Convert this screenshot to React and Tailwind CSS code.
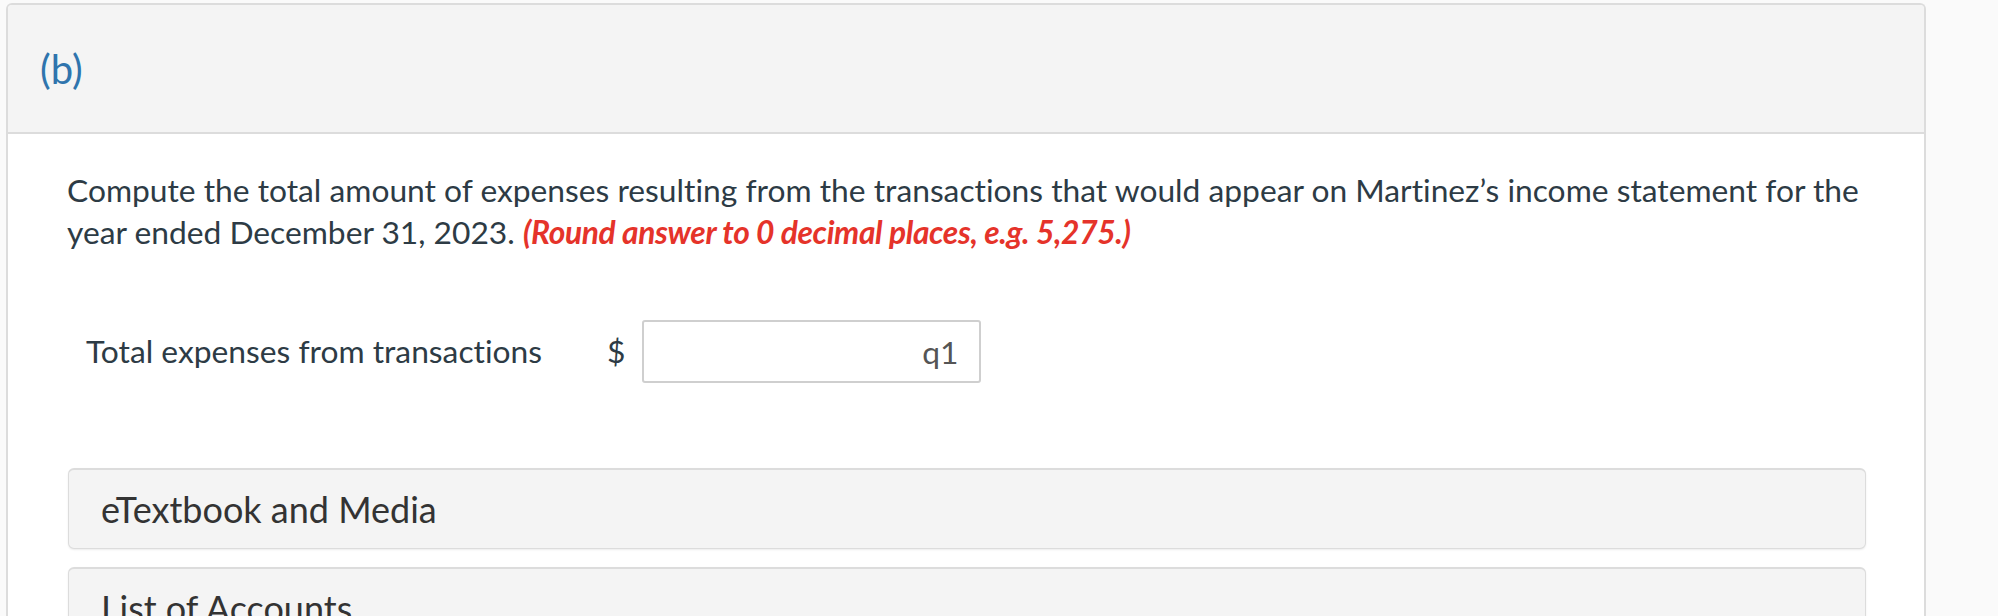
const Accordion = ({ title }) => {
  return (
    <div className="h-[81px] flex items-center px-[32px] bg-[#f4f4f4] border border-[#dcdcdc] border-t-2 rounded-md shadow-[0_1px_2px_rgba(0,0,0,0.08)]">
      <span className="text-[36px] text-[#333]">{title}</span>
    </div>
  );
};

const App = () => {
  return (
    <div className="min-h-screen bg-[#fafafa] pl-[6px] pt-[3px] font-['Lato',sans-serif] [font-variant-ligatures:none]">
      <div className="w-[1920px] min-h-[640px] bg-white border-2 border-b-0 border-[#dcdcdc] rounded-t-md overflow-hidden">
        <div className="h-[129px] flex items-center pl-[32px] bg-[#f4f4f4] border-b-2 border-[#dcdcdc]">
          <h2 className="text-[40px] text-[#2f74ad]">(b)</h2>
        </div>

        <div className="pl-[59px] pr-[58px] pt-[35px]">
          <p className="text-[31.75px] leading-[42px] text-[#2d3b45]">
            Compute the total amount of expenses resulting from the transactions that would appear on Martinez’s income statement for the year ended December 31, 2023.{" "}
            <span className="font-bold italic tracking-[-0.35px] text-[#e5332a]">(Round answer to 0 decimal places, e.g. 5,275.)</span>
          </p>

          <div className="flex items-center mt-[67px] ml-[19px]">
            <label htmlFor="q1" className="text-[31.75px] text-[#2d3b45]">
              Total expenses from transactions
            </label>
            <span className="ml-[65px] text-[31.75px] text-[#2d3b45]">$</span>
            <input
              id="q1"
              type="text"
              placeholder="q1"
              className="ml-[17px] w-[339px] h-[63px] px-[21px] text-right text-[31.75px] text-[#555] placeholder:text-[#555] bg-white border-2 border-[#cfcfcf] rounded-[3px]"
            />
          </div>

          <div className="mt-[85px] ml-[1px] flex flex-col gap-[18px]">
            <Accordion title="eTextbook and Media" />
            <Accordion title="List of Accounts" />
          </div>
        </div>
      </div>
    </div>
  );
};

export default App;
